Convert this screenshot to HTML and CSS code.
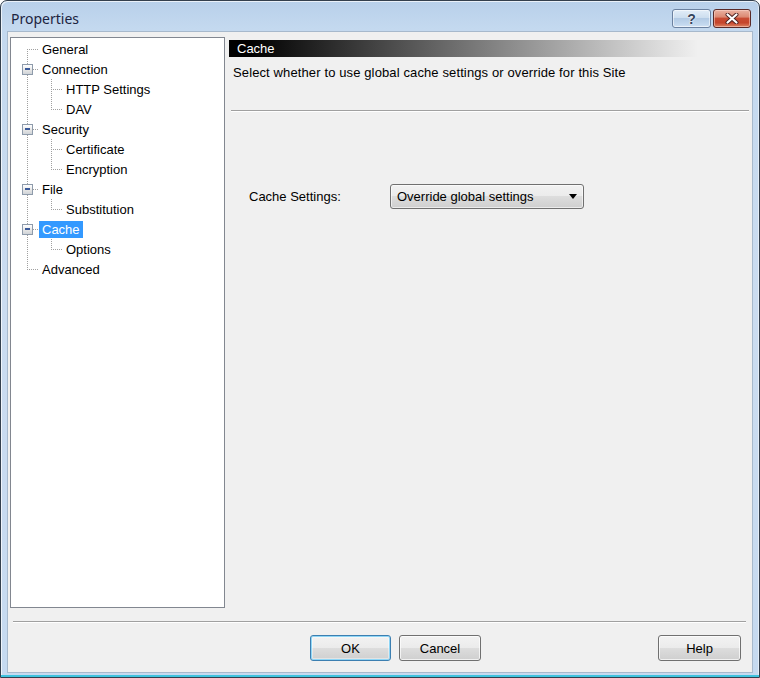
FILE: index.html
```html
<!DOCTYPE html>
<html>
<head>
<meta charset="utf-8">
<link rel="stylesheet" href="styles.css">
</head>
<body>
<div class="window">
  <div class="titlebar">
    <div class="title">Properties</div>
    <div class="tb-buttons">
      <div class="tb-btn tb-help"><span>?</span></div>
      <div class="tb-btn tb-close">
        <svg width="14" height="11" viewBox="0 0 14 11">
          <path d="M2.5 1.5 L11.5 9.5 M11.5 1.5 L2.5 9.5" stroke="#4a2020" stroke-width="4" stroke-linecap="round"/>
          <path d="M2.5 1.5 L11.5 9.5 M11.5 1.5 L2.5 9.5" stroke="#ffffff" stroke-width="2.2" stroke-linecap="round"/>
        </svg>
      </div>
    </div>
  </div>
  <div class="client">
    <div class="main">
      <div class="tree">
        <div class="row"><span class="cell first"></span><span class="label">General</span></div>
        <div class="row"><span class="cell tee"><span class="box"></span></span><span class="label">Connection</span></div>
        <div class="row"><span class="cell pipe"></span><span class="cell tee"></span><span class="label">HTTP Settings</span></div>
        <div class="row"><span class="cell pipe"></span><span class="cell corner"></span><span class="label">DAV</span></div>
        <div class="row"><span class="cell tee"><span class="box"></span></span><span class="label">Security</span></div>
        <div class="row"><span class="cell pipe"></span><span class="cell tee"></span><span class="label">Certificate</span></div>
        <div class="row"><span class="cell pipe"></span><span class="cell corner"></span><span class="label">Encryption</span></div>
        <div class="row"><span class="cell tee"><span class="box"></span></span><span class="label">File</span></div>
        <div class="row"><span class="cell pipe"></span><span class="cell corner"></span><span class="label">Substitution</span></div>
        <div class="row"><span class="cell tee"><span class="box"></span></span><span class="label selected">Cache</span></div>
        <div class="row"><span class="cell pipe"></span><span class="cell corner"></span><span class="label">Options</span></div>
        <div class="row"><span class="cell corner"></span><span class="label">Advanced</span></div>
      </div>
      <div class="panel">
        <div class="header">Cache</div>
        <div class="desc">Select whether to use global cache settings or override for this Site</div>
        <div class="rule"></div>
        <div class="setting">
          <span class="setting-label">Cache Settings:</span>
          <div class="combo"><span>Override global settings</span><span class="arrow"></span></div>
        </div>
      </div>
    </div>
    <div class="sep"></div>
    <div class="buttons">
      <div class="btn btn-ok">OK</div>
      <div class="btn btn-cancel">Cancel</div>
      <div class="btn btn-help">Help</div>
    </div>
  </div>
</div>
</body>
</html>
```

FILE: styles.css
```css
html, body {
  margin: 0;
  padding: 0;
  background: #ffffff;
}
body {
  font-family: "Liberation Sans", Arial, sans-serif;
  font-size: 13px;
  color: #000;
}
.window {
  width: 760px;
  height: 678px;
  box-sizing: border-box;
  border: 1px solid #34404e;
  border-radius: 7px 7px 0 0;
  background: linear-gradient(#b8d0ea, #c4d9ef 28px, #cbdcf0 300px, #c6daf0);
  box-shadow: inset 0 -2px 0 #3fc3de, inset 1px 1px 0 rgba(255,255,255,0.7), inset -1px 0 0 rgba(255,255,255,0.5);
  padding: 0 6px 4px;
  display: flex;
  flex-direction: column;
}
.titlebar {
  height: 30px;
  display: flex;
  justify-content: space-between;
  align-items: flex-start;
}
.title {
  font-family: "Noto Sans", "Open Sans", sans-serif;
  font-size: 14px;
  line-height: 20px;
  padding: 8px 0 0 4px;
  color: #1c2440;
}
.tb-buttons {
  display: flex;
  gap: 2px;
  margin: 8px 2px 0 0;
}
.tb-btn {
  height: 19px;
  box-sizing: border-box;
  border-radius: 3px;
  display: flex;
  align-items: center;
  justify-content: center;
}
.tb-help {
  width: 39px;
  border: 1px solid #6b81a0;
  background: linear-gradient(#e2edf8, #cddeef 45%, #b3cbe5 50%, #c3d8ee 85%, #d3e4f5);
  box-shadow: inset 0 0 0 1px rgba(255,255,255,0.55);
}
.tb-help span {
  font-family: "Liberation Sans", Arial, sans-serif;
  font-weight: bold;
  font-size: 14px;
  color: #34455c;
  text-shadow: 0 0 2px #fff, 0 0 1px #fff;
}
.tb-close {
  width: 38px;
  border: 1px solid #5a2a28;
  background: linear-gradient(#eab2a2, #dc8a74 40%, #c84b33 50%, #c5452c 75%, #dc8464);
  box-shadow: inset 0 0 0 1px rgba(255,220,210,0.5);
}
.client {
  flex: 1;
  border: 1px solid #a7b9cc;
  background: #f0f0f0;
  padding: 5px 2px 11px;
  display: flex;
  flex-direction: column;
}
.main {
  display: flex;
  height: 571px;
}
.tree {
  width: 215px;
  box-sizing: border-box;
  border: 1px solid #828790;
  background: #ffffff;
  padding: 1px 0 0 4px;
}
.row {
  height: 20px;
  display: flex;
  align-items: center;
}
.cell {
  width: 24px;
  height: 20px;
  flex: none;
  display: flex;
  align-items: center;
  justify-content: center;
}
.first {
  background:
    repeating-linear-gradient(#a0a0a0 0 1px, transparent 1px 2px) 12px 10px / 1px 10px no-repeat,
    repeating-linear-gradient(90deg, #a0a0a0 0 1px, transparent 1px 2px) 12px 10px / 12px 1px no-repeat;
}
.tee {
  background:
    repeating-linear-gradient(#a0a0a0 0 1px, transparent 1px 2px) 12px 0 / 1px 20px no-repeat,
    repeating-linear-gradient(90deg, #a0a0a0 0 1px, transparent 1px 2px) 12px 10px / 12px 1px no-repeat;
}
.corner {
  background:
    repeating-linear-gradient(#a0a0a0 0 1px, transparent 1px 2px) 12px 0 / 1px 11px no-repeat,
    repeating-linear-gradient(90deg, #a0a0a0 0 1px, transparent 1px 2px) 12px 10px / 12px 1px no-repeat;
}
.pipe {
  background:
    repeating-linear-gradient(#a0a0a0 0 1px, transparent 1px 2px) 12px 0 / 1px 20px no-repeat;
}
.box {
  width: 11px;
  height: 11px;
  box-sizing: border-box;
  border: 1px solid #8e9bab;
  background: linear-gradient(#ffffff, #e4e4e4 60%, #cfd3d8);
  display: flex;
  align-items: center;
  justify-content: center;
  margin-left: 1px;
}
.box::before {
  content: "";
  width: 5px;
  height: 2px;
  background: #3b5a9a;
}
.label {
  line-height: 17px;
  padding: 0 3px;
  white-space: nowrap;
}
.selected {
  background: #3399ff;
  color: #ffffff;
}
.panel {
  flex: 1;
  margin-left: 4px;
  display: flex;
  flex-direction: column;
}
.header {
  margin-top: 3px;
  height: 17px;
  line-height: 17px;
  padding-left: 8px;
  color: #ffffff;
  background: linear-gradient(90deg, #000 0, #000 4%, #f0f0f0 90%);
}
.desc {
  margin-top: 8px;
  line-height: 16px;
  padding-left: 4px;
  letter-spacing: 0.12px;
}
.rule {
  margin: 29px 1px 0 2px;
  border-top: 1px solid #a0a0a0;
  border-bottom: 1px solid #ffffff;
}
.setting {
  margin-top: 72px;
  display: flex;
  align-items: center;
  padding-left: 20px;
}
.setting-label {
  width: 141px;
}
.combo {
  width: 194px;
  height: 25px;
  box-sizing: border-box;
  border: 1px solid #707070;
  border-radius: 3px;
  background: linear-gradient(#f2f2f2, #ebebeb 50%, #dddddd 50%, #cfcfcf);
  box-shadow: inset 0 0 0 1px rgba(255,255,255,0.6);
  display: flex;
  align-items: center;
  justify-content: space-between;
  padding: 0 6px 0 6px;
}
.arrow {
  width: 0;
  height: 0;
  border-left: 4px solid transparent;
  border-right: 4px solid transparent;
  border-top: 5px solid #000;
}
.sep {
  margin: 13px 4px 0 3px;
  border-top: 1px solid #a0a0a0;
  border-bottom: 1px solid #ffffff;
}
.buttons {
  margin-top: 12px;
  height: 26px;
  display: flex;
  padding: 0 9px 0 300px;
}
.btn {
  height: 26px;
  box-sizing: border-box;
  border: 1px solid #707070;
  border-radius: 3px;
  background: linear-gradient(#f2f2f2, #ebebeb 50%, #dddddd 50%, #cfcfcf);
  box-shadow: inset 0 0 0 1px rgba(255,255,255,0.7);
  display: flex;
  align-items: center;
  justify-content: center;
}
.btn-ok {
  width: 81px;
  border-color: #3c7fb1;
  box-shadow: inset 0 0 0 1px #8fd6f6, inset 0 0 0 2px rgba(255,255,255,0.4);
}
.btn-cancel {
  width: 82px;
  margin-left: 8px;
}
.btn-help {
  width: 83px;
  margin-left: auto;
}
```
